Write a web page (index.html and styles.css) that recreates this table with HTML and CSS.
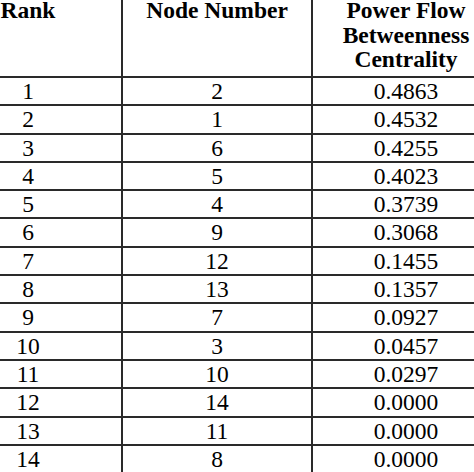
FILE: index.html
```html
<!DOCTYPE html>
<html>
<head>
<meta charset="utf-8">
<link rel="stylesheet" href="styles.css">
</head>
<body>
<table class="tbl">
  <colgroup>
    <col class="c1"><col class="c2"><col class="c3">
  </colgroup>
  <thead>
    <tr class="head">
      <th>Rank</th>
      <th>Node Number</th>
      <th>Power Flow<br>Betweenness<br>Centrality</th>
    </tr>
  </thead>
  <tbody>
    <tr><td>1</td><td>2</td><td>0.4863</td></tr>
    <tr><td>2</td><td>1</td><td>0.4532</td></tr>
    <tr><td>3</td><td>6</td><td>0.4255</td></tr>
    <tr><td>4</td><td>5</td><td>0.4023</td></tr>
    <tr><td>5</td><td>4</td><td>0.3739</td></tr>
    <tr><td>6</td><td>9</td><td>0.3068</td></tr>
    <tr><td>7</td><td>12</td><td>0.1455</td></tr>
    <tr><td>8</td><td>13</td><td>0.1357</td></tr>
    <tr><td>9</td><td>7</td><td>0.0927</td></tr>
    <tr><td>10</td><td>3</td><td>0.0457</td></tr>
    <tr><td>11</td><td>10</td><td>0.0297</td></tr>
    <tr><td>12</td><td>14</td><td>0.0000</td></tr>
    <tr><td>13</td><td>11</td><td>0.0000</td></tr>
    <tr><td>14</td><td>8</td><td>0.0000</td></tr>
  </tbody>
</table>
</body>
</html>
```
FILE: styles.css
```css
html, body {
  margin: 0;
  padding: 0;
  background: #ffffff;
  overflow: hidden;
  width: 474px;
  height: 472px;
}
.tbl {
  border-collapse: collapse;
  table-layout: fixed;
  width: 568px;
  margin-left: -67px;
  margin-top: -4px;
  font-family: "Liberation Serif", "Times New Roman", serif;
  font-size: 23.5px;
  color: #000000;
}
.c1 { width: 188px; }
.c2 { width: 190px; }
.c3 { width: 188px; }
.tbl th, .tbl td {
  border: 2px solid #2a2a2a;
  padding: 0;
  text-align: center;
}
.tbl th {
  font-weight: bold;
  line-height: 24.5px;
  padding-bottom: 4.5px;
  vertical-align: top;
}
.tbl td {
  line-height: 26.3px;
  vertical-align: middle;
}
```
